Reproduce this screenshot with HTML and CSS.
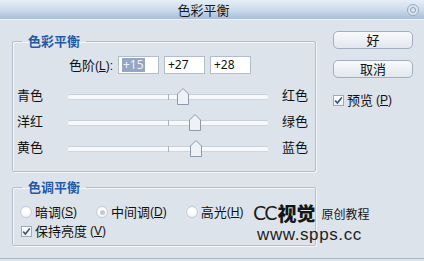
FILE: index.html
```html
<!DOCTYPE html>
<html lang="zh-CN">
<head>
<meta charset="utf-8">
<title>色彩平衡</title>
<link rel="stylesheet" href="styles.css">
</head>
<body>
<div class="window">
  <div class="titlebar">
    <span class="title">色彩平衡</span>
    <span class="tb-icon"><span class="tb-dot"></span></span>
  </div>
  <div class="main">
    <div class="left">
      <fieldset class="group">
        <legend>色彩平衡</legend>
        <div class="group-body balance-body">
          <div class="levels">
            <span class="levels-label">色阶<span class="lat">(<u>L</u>):</span></span>
            <span class="field"><span class="sel">+15</span></span>
            <span class="field">+27</span>
            <span class="field">+28</span>
          </div>
          <div class="sliders">
            <div class="slider-row">
              <span class="lbl">青色</span>
              <div class="track"><span class="tick"></span>
                <svg class="thumb" style="left:114.5px" width="12" height="17" viewBox="0 0 12 17"><polygon points="0.5,6 6,0.5 11.5,6 11.5,16.5 0.5,16.5" fill="#eef1f5" stroke="#8e99a9"/></svg>
              </div>
              <span class="lbl-r">红色</span>
            </div>
            <div class="slider-row">
              <span class="lbl">洋红</span>
              <div class="track"><span class="tick"></span>
                <svg class="thumb" style="left:127px" width="12" height="17" viewBox="0 0 12 17"><polygon points="0.5,6 6,0.5 11.5,6 11.5,16.5 0.5,16.5" fill="#eef1f5" stroke="#8e99a9"/></svg>
              </div>
              <span class="lbl-r">绿色</span>
            </div>
            <div class="slider-row">
              <span class="lbl">黄色</span>
              <div class="track"><span class="tick"></span>
                <svg class="thumb" style="left:128px" width="12" height="17" viewBox="0 0 12 17"><polygon points="0.5,6 6,0.5 11.5,6 11.5,16.5 0.5,16.5" fill="#eef1f5" stroke="#8e99a9"/></svg>
              </div>
              <span class="lbl-r">蓝色</span>
            </div>
          </div>
        </div>
      </fieldset>
      <fieldset class="group tone">
        <legend>色调平衡</legend>
        <div class="group-body tone-body">
          <div class="radios">
            <span class="radio"><span class="rb"></span>暗调<span class="lat">(<u>S</u>)</span></span>
            <span class="radio"><span class="rb on"></span>中间调<span class="lat">(<u>D</u>)</span></span>
            <span class="radio"><span class="rb"></span>高光<span class="lat">(<u>H</u>)</span></span>
          </div>
          <span class="check keep"><span class="cb"><svg width="9" height="9" viewBox="0 0 9 9"><path d="M1.2 4.6 L3.4 7 L7.8 1.6" fill="none" stroke="#3d5278" stroke-width="1.6"/></svg></span>保持亮度<span class="lat gap">(<u>V</u>)</span></span>
        </div>
      </fieldset>
    </div>
    <div class="right">
      <button class="btn">好</button>
      <button class="btn">取消</button>
      <span class="check preview"><span class="cb"><svg width="9" height="9" viewBox="0 0 9 9"><path d="M1.2 4.6 L3.4 7 L7.8 1.6" fill="none" stroke="#3d5278" stroke-width="1.6"/></svg></span>预览<span class="lat gap">(<u>P</u>)</span></span>
    </div>
  </div>
  <div class="watermark">
    <div class="wm-line1"><span class="wm-cc">CC</span><span class="wm-brand">视觉</span><span class="wm-sub">原创教程</span></div>
    <div class="wm-line2">www.spps.cc</div>
  </div>
</div>
</body>
</html>
```

FILE: styles.css
```css
* { box-sizing: border-box; }
html, body { margin: 0; padding: 0; }
body {
  width: 424px;
  height: 261px;
  overflow: hidden;
  background: #dde3eb;
  font-family: "Noto Sans CJK SC", sans-serif;
  font-size: 13px;
  color: #111;
  text-autospace: no-autospace;
}
.lat {
  font-family: "Liberation Sans", sans-serif;
  font-size: 12px;
  letter-spacing: 0;
}
.lat.gap { margin-left: 3px; }
u { text-underline-offset: 1px; }
.window {
  position: relative;
  height: 259px;
  border-bottom: 1px solid #aab6c6;
}
.titlebar {
  height: 20px;
  display: flex;
  align-items: center;
  background: linear-gradient(#e6eef8, #cbd9ea 55%, #a6bdd9);
  border-bottom: 1px solid #eef3f9;
}
.title {
  flex: 1;
  text-align: center;
  line-height: 18px;
  font-size: 13px;
  color: #1a1a1a;
}
.tb-icon {
  width: 12px;
  height: 12px;
  margin-right: 5px;
  border: 1px solid #9aaabd;
  border-radius: 50%;
  display: flex;
  align-items: center;
  justify-content: center;
  background: #dbe5f1;
}
.tb-dot {
  width: 6px;
  height: 6px;
  border: 1px solid #8e9fb4;
  border-radius: 50%;
}
.main {
  display: flex;
  padding-left: 12px;
}
.left {
  width: 304px;
  padding-top: 13px;
}
.right {
  margin-left: 17px;
  width: 80px;
  padding-top: 11px;
  display: flex;
  flex-direction: column;
}
.group {
  margin: 0;
  padding: 0;
  border: 1px solid #b5bfcc;
  border-radius: 2px;
  box-shadow: inset 1px 1px 0 #f2f5f9, 1px 1px 0 #f2f5f9;
}
.group legend {
  margin-left: 9px;
  padding: 0 6px;
  font-weight: bold;
  font-size: 13px;
  line-height: 16px;
  color: #2459a6;
}
.group.tone { margin-top: 7px; }
.balance-body { padding: 7px 0 14px 4px; }
.tone-body { padding: 9px 0 6px 7px; display: flex; flex-direction: column; gap: 3px; }

.levels {
  display: flex;
  align-items: center;
  height: 18px;
  gap: 5px;
}
.levels-label {
  width: 96px;
  text-align: right;
  line-height: 16px;
}
.field {
  width: 41px;
  height: 18px;
  border: 1px solid #b3bcc8;
  background: #fff;
  padding-left: 3px;
  font-family: "Noto Sans", sans-serif;
  font-size: 12px;
  line-height: 16px;
  color: #111;
}
.sel {
  display: inline-block;
  background: #95a5c6;
  color: #eef2f8;
  padding: 0 1px;
  line-height: 14px;
  margin-top: 1px;
}
.sliders {
  margin-top: 11px;
  display: flex;
  flex-direction: column;
  gap: 6px;
}
.slider-row {
  display: grid;
  grid-template-columns: 51px 200px 1fr;
  align-items: center;
  height: 20px;
  white-space: nowrap;
}
.lbl, .lbl-r { line-height: 16px; }
.lbl-r { margin-left: 14px; }
.track {
  position: relative;
  height: 20px;
}
.track::before {
  content: "";
  position: absolute;
  left: 0;
  right: 0;
  top: 9px;
  height: 4px;
  border-top: 1px solid #c9d0da;
  border-bottom: 1px solid #cfd5de;
  background: #f6f8fb;
  border-radius: 2px;
}
.tick {
  position: absolute;
  left: 100px;
  top: 9px;
  width: 1px;
  height: 6px;
  background: #a9b2be;
}
.thumb {
  position: absolute;
  top: 3px;
  transform: translateX(-50%);
}
.radios {
  display: flex;
  align-items: center;
  height: 16px;
  white-space: nowrap;
}
.radio + .radio { margin-left: 19px; }
.radio, .check {
  display: flex;
  align-items: center;
  line-height: 16px;
  white-space: nowrap;
}
.rb {
  width: 12px;
  height: 12px;
  margin-right: 3px;
  border-radius: 50%;
  border: 1px solid #c6cdd7;
  background: radial-gradient(circle at 50% 40%, #ffffff 30%, #e6eaf0 100%);
  display: flex;
  align-items: center;
  justify-content: center;
}
.rb.on::after {
  content: "";
  width: 5px;
  height: 5px;
  border-radius: 50%;
  background: #c3c9d2;
}
.cb {
  width: 11px;
  height: 11px;
  margin-right: 3px;
  border: 1px solid #9fa9b7;
  background: linear-gradient(#ffffff, #eceff4);
  display: flex;
  align-items: center;
  justify-content: center;
}
.keep { margin-left: 1px; height: 16px; }
.btn {
  width: 80px;
  height: 18px;
  padding: 0;
  border: 1px solid #a2aebe;
  border-radius: 5px;
  background: linear-gradient(#f8fafc, #e2e7ee);
  font-family: "Noto Sans CJK SC", sans-serif;
  font-size: 13px;
  line-height: 16px;
  color: #111;
}
.btn + .btn { margin-top: 11px; }
.preview { margin-top: 14px; height: 16px; }

.watermark {
  position: absolute;
  left: 253px;
  top: 201px;
  color: #161616;
}
.wm-line1 {
  display: flex;
  align-items: center;
  height: 24px;
  line-height: 22px;
}
.wm-cc {
  font-family: "DejaVu Sans", sans-serif;
  font-size: 19px;
  letter-spacing: -2px;
  color: #1b1b1b;
}
.wm-brand {
  font-weight: 900;
  font-size: 19px;
  margin-left: 2px;
}
.wm-sub {
  font-size: 12px;
  margin-left: 6px;
  padding-top: 2px;
}
.wm-line2 {
  margin-left: 4px;
  margin-top: 2px;
  font-family: "Liberation Sans", sans-serif;
  font-size: 17px;
  line-height: 16px;
  letter-spacing: 0.6px;
  color: #1e1e1e;
}
```
